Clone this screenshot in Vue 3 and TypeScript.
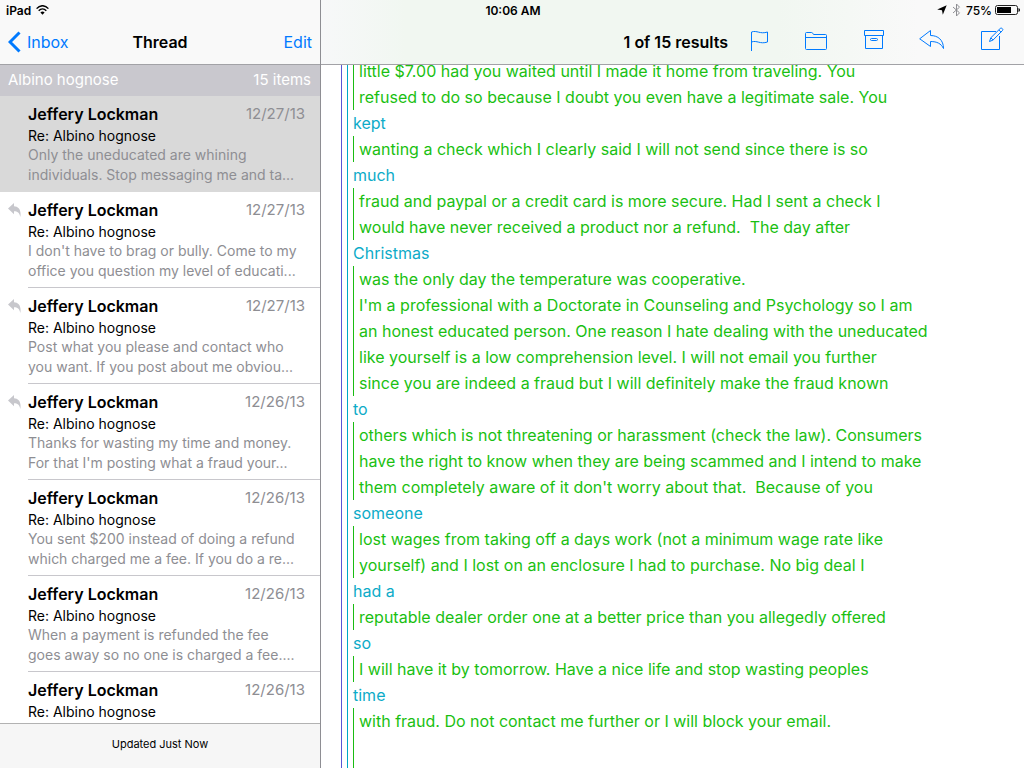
<script setup lang="ts">
interface Mail {
  date: string
  replied: boolean
  preview: string[]
}

interface Block {
  quoted: boolean
  lines: string[]
}

const mails: Mail[] = [
  { date: '12/27/13', replied: false, preview: ['Only the uneducated are whining', 'individuals. Stop messaging me and ta...'] },
  { date: '12/27/13', replied: true, preview: ["I don't have to brag or bully. Come to my", 'office you question my level of educati...'] },
  { date: '12/27/13', replied: true, preview: ['Post what you please and contact who', 'you want. If you post about me obviou...'] },
  { date: '12/26/13', replied: true, preview: ['Thanks for wasting my time and money.', "For that I'm posting what a fraud your..."] },
  { date: '12/26/13', replied: false, preview: ['You sent $200 instead of doing a refund', 'which charged me a fee. If you do a re...'] },
  { date: '12/26/13', replied: false, preview: ['When a payment is refunded the fee', 'goes away so no one is charged a fee....'] },
  { date: '12/26/13', replied: false, preview: [] },
]

const blocks: Block[] = [
  { quoted: true, lines: ['little $7.00 had you waited until I made it home from traveling. You', 'refused to do so because I doubt you even have a legitimate sale. You'] },
  { quoted: false, lines: ['kept'] },
  { quoted: true, lines: ['wanting a check which I clearly said I will not send since there is so'] },
  { quoted: false, lines: ['much'] },
  { quoted: true, lines: ['fraud and paypal or a credit card is more secure. Had I sent a check I', 'would have never received a product nor a refund.  The day after'] },
  { quoted: false, lines: ['Christmas'] },
  {
    quoted: true,
    lines: [
      'was the only day the temperature was cooperative.',
      "I'm a professional with a Doctorate in Counseling and Psychology so I am",
      'an honest educated person. One reason I hate dealing with the uneducated',
      'like yourself is a low comprehension level. I will not email you further',
      'since you are indeed a fraud but I will definitely make the fraud known',
    ],
  },
  { quoted: false, lines: ['to'] },
  {
    quoted: true,
    lines: [
      'others which is not threatening or harassment (check the law). Consumers',
      'have the right to know when they are being scammed and I intend to make',
      "them completely aware of it don't worry about that.  Because of you",
    ],
  },
  { quoted: false, lines: ['someone'] },
  { quoted: true, lines: ['lost wages from taking off a days work (not a minimum wage rate like', 'yourself) and I lost on an enclosure I had to purchase. No big deal I'] },
  { quoted: false, lines: ['had a'] },
  { quoted: true, lines: ['reputable dealer order one at a better price than you allegedly offered'] },
  { quoted: false, lines: ['so'] },
  { quoted: true, lines: ['I will have it by tomorrow. Have a nice life and stop wasting peoples'] },
  { quoted: false, lines: ['time'] },
  { quoted: true, lines: ['with fraud. Do not contact me further or I will block your email.'] },
]
</script>

<template>
  <div class="app">
    <div class="status">
      <div class="status-left">
        <span>iPad</span>
        <svg width="13" height="10" viewBox="0 0 13 10" aria-hidden="true">
          <path d="M.6 3.600C4-.3 9-.3 12.400 3.600M2.700 5.700C5 3.200 8 3.200 10.300 5.700" fill="none" stroke="#000" stroke-width="1.400" />
          <path d="M4.400 7.400Q6.500 5.400 8.600 7.400L6.500 9.700Z" />
        </svg>
      </div>
      <time>10:06 AM</time>
      <div class="status-right">
        <svg width="10" height="10" viewBox="0 0 10 10" aria-hidden="true"><path d="M9.700.3L5.800 9.800 5 5.200 .2 4.500Z" /></svg>
        <svg width="9" height="14" viewBox="0 0 9 14" aria-hidden="true">
          <path d="M1 4L7.500 9.800 4.500 13V1L7.500 4.200 1 10" fill="none" stroke="#8e8e93" stroke-width="1" />
        </svg>
        <span class="charge">
          <span>75%</span>
          <svg width="25" height="10" viewBox="0 0 25 10" aria-hidden="true">
            <rect x=".5" y=".5" width="22" height="9" rx="2" fill="none" stroke="#222" />
            <rect x="2" y="2" width="14" height="6" />
            <path d="M23.500 3Q25 3.500 25 5T23.500 7Z" />
          </svg>
        </span>
      </div>
    </div>

    <aside class="sidebar">
      <header class="bar nav">
        <button type="button" class="back">
          <svg width="13" height="22" viewBox="0 0 13 22" aria-hidden="true"><path d="M11.500 1.500L2 11 11.500 20.500" fill="none" stroke="#007aff" stroke-width="3" /></svg>
          <span>Inbox</span>
        </button>
        <h1>Thread</h1>
        <button type="button" class="edit">Edit</button>
      </header>
      <div class="section"><span>Albino hognose</span><span>15 items</span></div>
      <ul class="mails">
        <li v-for="(mail, i) in mails" :key="i">
          <a href="#" class="mail" :class="{ selected: i === 0 }">
            <span class="mark">
              <svg v-if="mail.replied" width="13" height="14" viewBox="0 0 13 14" role="img" aria-label="Replied">
                <path d="M0 5.500L6 0V3.200C10.500 3.200 13.500 7 12.300 14 11.500 9.800 9.500 8.200 6 8.200V11.200Z" fill="#c7c7cc" />
              </svg>
            </span>
            <span class="mail-body">
              <span class="mail-top"><b>Jeffery Lockman</b><time>{{ mail.date }}</time></span>
              <span class="subject">Re: Albino hognose</span>
              <span v-for="line in mail.preview" :key="line" class="preview">{{ line }}</span>
            </span>
          </a>
        </li>
      </ul>
      <footer>Updated Just Now</footer>
    </aside>

    <main class="detail">
      <header class="bar tools">
        <h2>1 of 15 results</h2>
        <div class="buttons">
          <button type="button" aria-label="Flag">
            <svg width="24" height="24" viewBox="0 0 24 24"><path d="M4.500 23V4C10 2 13 6.500 20.500 4V14C13 16.500 10 12 4.500 14" /></svg>
          </button>
          <button type="button" aria-label="Move to folder">
            <svg width="24" height="24" viewBox="0 0 24 24"><path d="M.5 20.500V5.500Q.5 4.500 1.500 4.500H6.500Q7.500 4.500 7.800 5.500T9 6.500H20.500Q21.500 6.500 21.500 7.500V20.500Q21.500 21.500 20.500 21.500H1.500Q.5 21.500.5 20.500ZM.5 9.500H21.500" /></svg>
          </button>
          <button type="button" aria-label="Archive">
            <svg width="24" height="24" viewBox="0 0 24 24"><path d="M1.500 2.500H20.500V7.500H1.500ZM2.500 7.500V20.500H19.500V7.500" /><rect x="7.500" y="10.500" width="7" height="2" rx="1" /></svg>
          </button>
          <button type="button" aria-label="Reply">
            <svg width="26" height="24" viewBox="1 0 26 24"><path d="M.7 10.800L11.500 2.500V7.500C19 7.500 24.500 12 24.500 20.500 22 15.500 18 13.500 11.500 13.500V18.500Z" /></svg>
          </button>
          <button type="button" aria-label="Compose">
            <svg width="24" height="24" viewBox="0 0 24 24"><path d="M17 3.500H2.500V21.500H20.500V8" /><path d="M10.500 13.500L11.800 9.800 21.300.4Q22.300-.3 23.300.6T23.500 2.500L14.100 12ZM19.800 1.900L22 4.100M11.800 9.800L14.100 12" /></svg>
          </button>
        </div>
      </header>
      <div class="message">
        <blockquote class="level-one">
          <blockquote class="level-two">
            <component :is="block.quoted ? 'blockquote' : 'div'" v-for="(block, i) in blocks" :key="i" :class="{ 'level-three': block.quoted }">
              <p v-for="line in block.lines" :key="line">{{ line }}</p>
            </component>
          </blockquote>
        </blockquote>
      </div>
    </main>
  </div>
</template>

<style>
body { margin: 0; }
</style>

<style scoped>
.app {
  position: relative;
  display: flex;
  height: 100vh;
  overflow: hidden;
  background: #fff;
  color: #000;
  font-family: Inter, "Liberation Sans", sans-serif;
}
.app *, .app { box-sizing: border-box; }
h1, h2, p, ul, blockquote { margin: 0; padding: 0; }
svg { display: block; flex: none; }
button { border: 0; padding: 0; background: none; color: #007aff; font: inherit; }
.status {
  position: absolute;
  inset: 0 0 auto;
  z-index: 1;
  display: grid;
  grid-template-columns: 1fr auto 1fr;
  align-items: center;
  height: 20px;
  padding: 0 4px 0 6px;
  font-size: 12px;
  font-weight: 600;
}
.status-left, .status-right { display: flex; align-items: center; gap: 5px; }
.status-right { justify-content: flex-end; }
.charge { display: flex; align-items: center; gap: 3px; font-weight: 500; }
.sidebar {
  display: flex;
  flex: 0 0 321px;
  flex-direction: column;
  border-right: 1px solid #8e8e93;
}
.bar {
  flex: none;
  height: 65px;
  padding-top: 20px;
  border-bottom: 1px solid #a2a2a6;
}
.nav {
  display: grid;
  grid-template-columns: 1fr auto 1fr;
  align-items: center;
  padding-left: 8px;
  padding-right: 8px;
  background: #f9f9f9;
  font-size: 16px;
}
.back { display: flex; align-items: center; gap: 6px; }
.edit { justify-self: end; }
h1, h2 { font-size: 16px; font-weight: 600; }
.section {
  display: flex;
  flex: none;
  justify-content: space-between;
  align-items: center;
  height: 31px;
  padding: 0 9px 2px 8px;
  background: #c9c8ce;
  color: #fff;
  font-size: 15px;
}
.mails { flex: 1; min-height: 0; overflow: hidden; list-style: none; }
.mail { display: flex; height: 96px; color: inherit; text-decoration: none; }
.mail.selected { background: #d9d9d9; }
.mark { flex: 0 0 28px; padding: 11px 0 0 8px; }
.mail-body {
  display: flex;
  flex: 1;
  flex-direction: column;
  min-width: 0;
  padding-top: 6px;
  border-bottom: 1px solid #c8c7cc;
  white-space: nowrap;
}
.selected .mail-body { border-color: transparent; }
.mail-top {
  display: flex;
  justify-content: space-between;
  align-items: center;
  margin-bottom: 1px;
  padding-right: 15px;
  font-size: 16px;
  line-height: 24px;
}
.mail-top b { font-weight: 600; }
.mail-top time, .preview { color: #8e8e93; }
.mail-top time { font-size: 15px; }
.subject { font-size: 14px; line-height: 18px; }
.preview { font-size: 14px; line-height: 20px; }
footer {
  flex: none;
  height: 45px;
  border-top: 1px solid #b2b2b2;
  background: #f6f6f6;
  font-size: 11px;
  line-height: 40px;
  text-align: center;
}
.detail { display: flex; flex: 1; flex-direction: column; min-width: 0; }
.tools {
  display: flex;
  justify-content: flex-end;
  align-items: center;
  gap: 2px;
  padding-right: 4px;
  background: linear-gradient(90deg, #f7f8f9, #f1f7f1 12%, #f1f7f1 65%, #f9f9f9 85%);
}
.buttons { display: flex; height: 100%; }
.buttons button { display: grid; place-items: center; width: 58px; padding-bottom: 4px; }
.buttons path, .buttons rect { fill: none; stroke: #007aff; stroke-width: 1; }
.buttons svg { overflow: visible; }
.message {
  flex: 1;
  min-height: 0;
  overflow: hidden;
  padding-left: 20px;
  font-size: 16px;
  line-height: 26px;
  white-space: pre;
}
.level-one { height: 100%; border-left: 1px solid #5856d6; padding-left: 5px; }
.level-two { display: flow-root; height: 100%; border-left: 1px solid #00a8c6; padding-left: 5px; color: #0dabc8; }
.level-two > :first-child { margin-top: -7px; }
.level-three { border-left: 1px solid #1abc12; padding-left: 5px; color: #1abf12; }
.level-three:last-child { min-height: 100px; }
</style>
